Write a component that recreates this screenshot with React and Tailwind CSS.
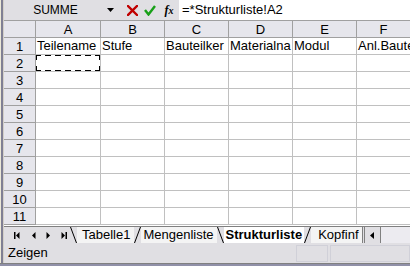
import React from 'react'

const cols = [
  { l: 'A', w: 'w-[65px]', v: 'Teilename' },
  { l: 'B', w: 'w-[64px]', v: 'Stufe' },
  { l: 'C', w: 'w-[64px]', v: 'Bauteilker' },
  { l: 'D', w: 'w-[64px]', v: 'Materialna' },
  { l: 'E', w: 'w-[64px]', v: 'Modul' },
  { l: 'F', w: 'w-[54px]', v: 'Anl.Baute' },
]

const rows = [1, 2, 3, 4, 5, 6, 7, 8, 9, 10, 11]

function NavButtons() {
  return (
    <div className="flex items-center h-full pl-[10px]">
      <svg width="6" height="7" viewBox="0 0 6 7">
        <rect x="0" y="0" width="1.5" height="7" fill="#000" />
        <path d="M5.5 0 L2 3.5 L5.5 7 Z" fill="#000" />
      </svg>
      <svg width="5" height="7" viewBox="0 0 5 7" className="ml-[11px]">
        <path d="M4.5 0 L1 3.5 L4.5 7 Z" fill="#000" />
      </svg>
      <svg width="5" height="7" viewBox="0 0 5 7" className="ml-[10px]">
        <path d="M0.5 0 L4 3.5 L0.5 7 Z" fill="#000" />
      </svg>
      <svg width="6" height="7" viewBox="0 0 6 7" className="ml-[10px]">
        <path d="M0.5 0 L4 3.5 L0.5 7 Z" fill="#000" />
        <rect x="4.5" y="0" width="1.5" height="7" fill="#000" />
      </svg>
    </div>
  )
}

function Slant({ dir }) {
  return (
    <svg width="7" height="17" viewBox="0 0 7 17" className="shrink-0">
      {dir === 'l' ? (
        <line x1="0.5" y1="0" x2="6.5" y2="16" stroke="#000" strokeWidth="1" />
      ) : (
        <line x1="0.5" y1="16" x2="6.5" y2="0" stroke="#000" strokeWidth="1" />
      )}
    </svg>
  )
}

export default function App() {
  return (
    <div className="w-[410px] h-[266px] overflow-hidden bg-[#e0dfe3] flex flex-col font-['Liberation_Sans',Arial,sans-serif] text-black select-none">
      <div className="flex flex-1 min-h-0">
        {/* left window edge */}
        <div className="w-[4px] shrink-0 bg-[#d4d0c8] border-l border-[#ece9d8] flex">
          <div className="w-[2px] bg-[#808094]" />
        </div>

        <div className="flex-1 min-w-0 flex flex-col">
          {/* formula bar */}
          <div className="h-[21px] shrink-0 flex items-stretch border-b border-[#a0a0a0] bg-[#e0dfe3]">
            <div className="w-[103px] flex items-center justify-center text-[12px]">SUMME</div>
            <div className="w-[16px] flex items-center">
              <svg width="7" height="4" viewBox="0 0 7 4">
                <path d="M0 0 H7 L3.5 4 Z" fill="#000" />
              </svg>
            </div>
            <div className="w-[18px] flex items-center justify-center">
              <svg width="11" height="11" viewBox="0 0 11 11">
                <path d="M1 1 L10 10 M10 1 L1 10" stroke="#c00000" strokeWidth="2.4" strokeLinecap="square" />
              </svg>
            </div>
            <div className="w-[18px] flex items-center justify-center">
              <svg width="12" height="11" viewBox="0 0 12 11">
                <path d="M1 5 L4.5 9.5 L11 1" stroke="#18a018" strokeWidth="2.4" fill="none" />
              </svg>
            </div>
            <div className="w-[20px] flex items-center justify-center text-[12px] italic font-['Liberation_Serif',serif] font-bold">
              f<span className="text-[10px]">x</span>
            </div>
            <div className="flex-1 bg-white flex items-center pl-[3px] text-[13px] whitespace-nowrap">
              =*Strukturliste!A2
            </div>
          </div>

          {/* grid */}
          <div className="flex-1 min-h-0 bg-white overflow-hidden">
            <div className="flex h-[17px] bg-[#e6e6ec]">
              <div className="w-[32px] shrink-0 border-r border-b border-[#a0a0a0]" />
              {cols.map((c) => (
                <div
                  key={c.l}
                  className={`${c.w} shrink-0 border-r border-b border-[#a0a0a0] flex items-center justify-center text-[13px] leading-none`}
                >
                  {c.l}
                </div>
              ))}
            </div>
            {rows.map((r) => (
              <div key={r} className="flex h-[17px]">
                <div className="w-[32px] shrink-0 bg-[#e6e6ec] border-r border-b border-[#a0a0a0] flex items-center justify-center text-[13px] leading-none">
                  {r}
                </div>
                {cols.map((c, i) => (
                  <div
                    key={c.l}
                    className={`${c.w} shrink-0 border-r border-b border-[#c0c0c0] overflow-hidden whitespace-nowrap text-[13px] leading-[16px] pl-[1px] relative`}
                  >
                    {r === 1 ? c.v : ''}
                    {r === 2 && i === 0 && (
                      <div className="absolute inset-[-1px] border-2 border-dashed border-black" />
                    )}
                  </div>
                ))}
              </div>
            ))}
          </div>

          {/* tab bar */}
          <div className="h-[17px] shrink-0 flex items-stretch bg-[#e0dfe3] border-t border-[#808080]">
            <div className="w-[66px] shrink-0">
              <NavButtons />
            </div>
            <div className="flex items-stretch text-[13px] leading-[16px] whitespace-nowrap">
              <Slant dir="l" />
              <div className="pl-[5px] pr-[4px] bg-[#f4f4f4]">Tabelle1</div>
              <Slant dir="r" />
              <div className="pl-[2px] pr-[3px] bg-[#f4f4f4]">Mengenliste</div>
              <Slant dir="l" />
              <div className="px-[2px] bg-white font-bold">Strukturliste</div>
              <Slant dir="r" />
              <div className="pl-[7px] pr-[3px] bg-[#f4f4f4]">Kopfinf</div>
            </div>
            <div className="w-[3px] shrink-0 border-l border-r border-[#808080] bg-[#e0dfe3]" />
            <div className="w-[16px] shrink-0 flex items-center justify-center border-r border-[#808080]">
              <svg width="4" height="7" viewBox="0 0 4 7">
                <path d="M4 0 L0 3.5 L4 7 Z" fill="#000" />
              </svg>
            </div>
            <div className="flex-1 bg-[#ecebf0]" />
          </div>

          {/* status bar */}
          <div className="h-[20px] shrink-0 flex items-center bg-[#e0dfe3] text-[13px]">
            <div className="flex-1 pl-[4px]">Zeigen</div>
            <div className="w-[32px] h-[17px] border border-[#d0d0d8]" />
            <div className="w-[80px] h-[17px] ml-[2px] border border-[#d0d0d8]" />
          </div>
        </div>
      </div>
      <div className="h-[3px] shrink-0 border-t border-[#808080] bg-[#9090a8]" />
    </div>
  )
}
